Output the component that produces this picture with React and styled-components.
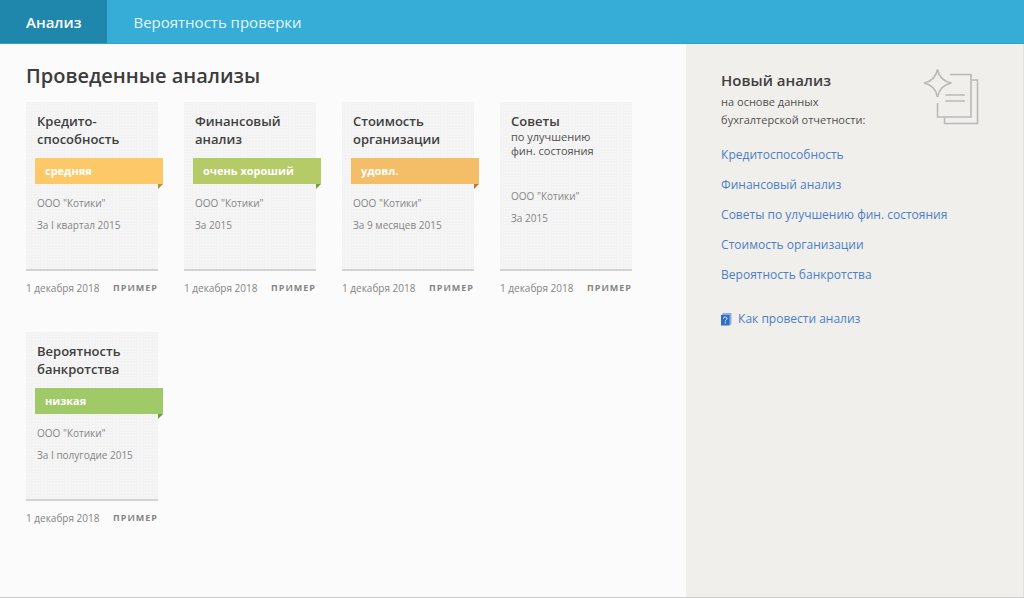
import React from "react";
import styled, { createGlobalStyle } from "styled-components";

function App() {
  const analyses = [
    {
      title: ["Кредито-", "способность"],
      rating: "средняя",
      color: "#fdc968",
      fold: "#b98a45",
      period: "За I квартал 2015",
    },
    {
      title: ["Финансовый", "анализ"],
      rating: "очень хороший",
      color: "#b5cb67",
      fold: "#78a03a",
      period: "За 2015",
    },
    {
      title: ["Стоимость", "организации"],
      rating: "удовл.",
      color: "#f4bd68",
      fold: "#b07a3c",
      period: "За 9 месяцев 2015",
    },
    {
      title: ["Советы"],
      note: ["по улучшению", "фин. состояния"],
      period: "За 2015",
    },
    {
      title: ["Вероятность", "банкротства"],
      rating: "низкая",
      color: "#a0c967",
      fold: "#6f9c38",
      period: "За I полугодие 2015",
    },
  ];

  const links = [
    "Кредитоспособность",
    "Финансовый анализ",
    "Советы по улучшению фин. состояния",
    "Стоимость организации",
    "Вероятность банкротства",
  ];

  return (
    <Page>
      <GlobalStyle />
      <Tabs>
        <Tab href="#analysis" $active>
          Анализ
        </Tab>
        <Tab href="#audit">Вероятность проверки</Tab>
      </Tabs>
      <Body>
        <Main>
          <Heading>Проведенные анализы</Heading>
          <Grid>
            {analyses.map((a, index) => (
              <article key={index}>
                <Card>
                  <CardTitle>
                    {a.title.map((line) => (
                      <span key={line}>{line}</span>
                    ))}
                  </CardTitle>
                  {a.note && (
                    <Note>
                      {a.note.map((line) => (
                        <span key={line}>{line}</span>
                      ))}
                    </Note>
                  )}
                  {a.rating && (
                    <Ribbon $color={a.color} $fold={a.fold}>
                      {a.rating}
                    </Ribbon>
                  )}
                  <Meta>ООО "Котики"</Meta>
                  <Meta>{a.period}</Meta>
                </Card>
                <CardFooter>
                  <time dateTime="2018-12-01">1 декабря 2018</time>
                  <Sample>Пример</Sample>
                </CardFooter>
              </article>
            ))}
          </Grid>
        </Main>
        <Sidebar>
          <SidebarHead>
            <div>
              <SidebarTitle>Новый анализ</SidebarTitle>
              <SidebarText>
                на основе данных
                <br />
                бухгалтерской отчетности:
              </SidebarText>
            </div>
            <ReportIcon />
          </SidebarHead>
          <LinkList>
            {links.map((text) => (
              <li key={text}>
                <Link href="#new">{text}</Link>
              </li>
            ))}
          </LinkList>
          <HelpLink href="#help">
            <BookIcon />
            Как провести анализ
          </HelpLink>
        </Sidebar>
      </Body>
    </Page>
  );
}

function ReportIcon() {
  return (
    <svg
      width="56"
      height="58"
      viewBox="0 0 56 58"
      fill="none"
      stroke="#b9b9b9"
      strokeWidth="1.6"
      aria-hidden="true"
    >
      <path d="M14.5 1.5C16 9 20.5 13.5 28.5 15C20.5 16.5 16 21 14.5 29C13 21 8.5 16.5 1 15C8.5 13.5 13 9 14.5 1.5Z" />
      <path d="M27 6.500H48V49H14.500V35" />
      <path d="M48.500 12H54.500V55.500H21.500V49.500" />
      <path d="M22.500 27H42M22.500 33H42" />
    </svg>
  );
}

function BookIcon() {
  return (
    <svg width="11" height="13" viewBox="0 0 11 13" aria-hidden="true">
      <path d="M0.500 2L2 0H10.500V11L9 12.500Z" fill="#8fb0dc" />
      <path d="M0 2H8.500V12.500H0Z" fill="#2f6fc4" />
      <path
        d="M2.500 5.500C2.500 3.500 6 3.500 6 5.500C6 6.800 4.300 6.700 4.300 8.300M4.300 9.300V10.500"
        fill="none"
        stroke="#ffffff"
      />
    </svg>
  );
}

const GlobalStyle = createGlobalStyle`
  * {
    box-sizing: border-box;
  }
  body {
    margin: 0;
    background: #fbfbfb;
    color: #505050;
    font-family: "Open Sans", "Noto Sans", sans-serif;
    font-size: 12px;
  }
`;

const Page = styled.div`
  display: flex;
  flex-direction: column;
  min-height: 100vh;
  border-bottom: 1px solid #cccccc;
`;

const Tabs = styled.nav`
  display: flex;
  background: #36add7;
  border-bottom: 1px solid #2fa3cd;
`;

const Tab = styled.a`
  padding: 10px 26px 9px;
  font-size: 15px;
  line-height: 24px;
  font-weight: ${(props) => (props.$active ? 600 : 400)};
  color: ${(props) => (props.$active ? "#ffffff" : "#e8f6fb")};
  background: ${(props) => (props.$active ? "#1f87ab" : "transparent")};
  text-decoration: none;
`;

const Body = styled.div`
  display: flex;
  flex: 1;
`;

const Main = styled.main`
  flex: 1;
  padding: 18px 26px;
`;

const Heading = styled.h1`
  margin: 0 0 12px;
  font-size: 20px;
  line-height: 28px;
  font-weight: 600;
  color: #3c3c3c;
`;

const Grid = styled.div`
  display: grid;
  grid-template-columns: repeat(auto-fill, 132px);
  gap: 33px 26px;
`;

const Card = styled.div`
  display: flex;
  flex-direction: column;
  min-height: 169px;
  padding: 10px 11px;
  border-bottom: 2px solid #d2d2d2;
  background-color: #f3f3f3;
  background-image: radial-gradient(#fafafa 1px, transparent 1px);
  background-size: 3px 3px;
`;

const CardTitle = styled.h2`
  margin: 0;
  font-size: 13px;
  line-height: 18px;
  font-weight: 600;
  color: #404040;
  span {
    display: block;
  }
`;

const Note = styled.p`
  margin: 0 0 27px;
  font-size: 11px;
  line-height: 14px;
  span {
    display: block;
  }
`;

const Ribbon = styled.div`
  position: relative;
  margin: 10px -16px 8px -2px;
  padding: 0 10px;
  font-size: 11px;
  line-height: 26px;
  font-weight: 700;
  color: #ffffff;
  background: ${(props) => props.$color};
  &::after {
    content: "";
    position: absolute;
    top: 100%;
    right: 0;
    border-top: 5px solid ${(props) => props.$fold};
    border-right: 5px solid transparent;
  }
`;

const Meta = styled.div`
  font-size: 10px;
  line-height: 22px;
  color: #858585;
  white-space: nowrap;
`;

const CardFooter = styled.footer`
  display: flex;
  justify-content: space-between;
  padding-top: 6px;
  font-size: 10px;
  line-height: 22px;
  color: #858585;
`;

const Sample = styled.span`
  font-size: 9px;
  font-weight: 700;
  letter-spacing: 1px;
  text-transform: uppercase;
`;

const Sidebar = styled.aside`
  width: 33%;
  padding: 24px 44px 24px 35px;
  border-right: 1px solid #e2e1df;
  background: #f1efec;
`;

const SidebarHead = styled.div`
  display: flex;
  justify-content: space-between;
  margin-bottom: 11px;
`;

const SidebarTitle = styled.h2`
  margin: 0 0 1px;
  font-size: 15px;
  line-height: 24px;
  font-weight: 600;
  color: #404040;
`;

const SidebarText = styled.p`
  margin: 0;
  font-size: 11px;
  line-height: 18px;
`;

const LinkList = styled.ul`
  margin: 0 0 14px;
  padding: 0;
  list-style: none;
  line-height: 30px;
`;

const Link = styled.a`
  color: #4a7fc6;
  text-decoration: none;
`;

const HelpLink = styled(Link)`
  display: flex;
  align-items: center;
  gap: 6px;
  line-height: 30px;
`;

export default App;
